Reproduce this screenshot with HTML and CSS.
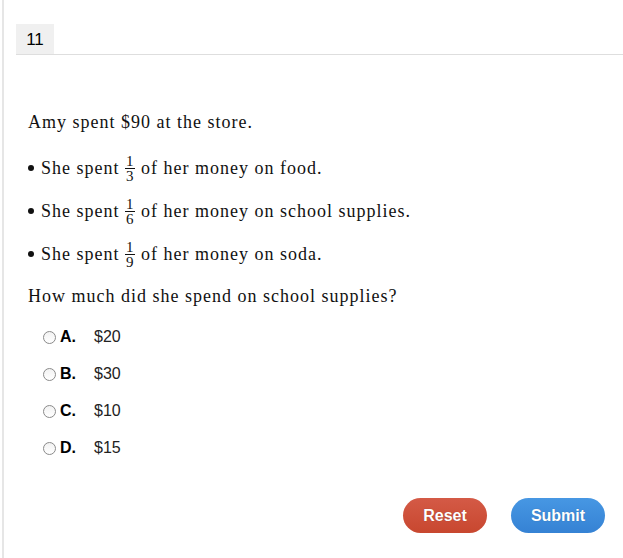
FILE: index.html
```html
<!DOCTYPE html>
<html>
<head>
<meta charset="utf-8">
<link rel="stylesheet" href="styles.css">
</head>
<body>
<div class="page">
  <div class="header">
    <div class="tab">11</div>
  </div>
  <div class="content">
    <p class="line first">Amy spent $90 at the store.</p>
    <p class="line bullet"><span class="dot"></span>She spent <span class="frac"><span class="num">1</span><span class="den">3</span></span> of her money on food.</p>
    <p class="line bullet"><span class="dot"></span>She spent <span class="frac"><span class="num">1</span><span class="den">6</span></span> of her money on school supplies.</p>
    <p class="line bullet last"><span class="dot"></span>She spent <span class="frac"><span class="num">1</span><span class="den">9</span></span> of her money on soda.</p>
    <p class="line question">How much did she spend on school supplies?</p>
    <div class="options">
      <label class="option"><span class="radio"></span><span class="letter">A.</span><span class="value">$20</span></label>
      <label class="option"><span class="radio"></span><span class="letter">B.</span><span class="value">$30</span></label>
      <label class="option"><span class="radio"></span><span class="letter">C.</span><span class="value">$10</span></label>
      <label class="option"><span class="radio"></span><span class="letter">D.</span><span class="value">$15</span></label>
    </div>
  </div>
  <div class="actions">
    <button class="btn reset">Reset</button>
    <button class="btn submit">Submit</button>
  </div>
</div>
</body>
</html>
```
FILE: styles.css
```css
html, body {
  margin: 0;
  padding: 0;
  background: #fff;
}
.page {
  margin-left: 2px;
  border-left: 2px solid #e6e6e6;
  min-height: 558px;
  box-sizing: border-box;
  padding-top: 24px;
}
.header {
  margin-left: 12px;
  border-bottom: 1px solid #dedede;
  display: flex;
}
.tab {
  width: 38px;
  height: 30px;
  background: #f0f0f0;
  font-family: "Liberation Sans", Arial, sans-serif;
  font-size: 17px;
  line-height: 31px;
  text-align: center;
  color: #000;
}
.content {
  padding-left: 24px;
  padding-top: 55px;
}
.line {
  margin: 0 0 19px 0;
  height: 24px;
  font-family: "Liberation Serif", serif;
  font-size: 18px;
  line-height: 24px;
  letter-spacing: 1px;
  color: #111;
  display: flex;
  align-items: center;
  white-space: pre;
}
.line.first {
  margin-bottom: 22px;
}
.line.last {
  margin-bottom: 18px;
}
.line.question {
  margin-bottom: 20px;
}
.dot {
  display: inline-block;
  width: 6px;
  height: 6px;
  background: #111;
  border-radius: 50%;
  margin: 0 7px 0 0;
}
.frac {
  display: inline-flex;
  flex-direction: column;
  align-items: center;
  font-size: 15px;
  line-height: 12px;
  letter-spacing: 0;
  margin: 0 1px 0 0;
}
.num {
  border-bottom: 1px solid #111;
  padding: 0 1px 1px;
}
.den {
  padding-top: 1px;
}
.options {
  padding-left: 15px;
  display: flex;
  flex-direction: column;
  gap: 19px;
}
.option {
  display: flex;
  align-items: center;
  height: 18px;
  font-family: "Liberation Sans", Arial, sans-serif;
  font-size: 16px;
}
.radio {
  width: 11px;
  height: 11px;
  border: 1px solid #8a8a8a;
  border-radius: 50%;
  background: linear-gradient(#f2f2f2, #fff);
  margin-right: 4px;
}
.letter {
  font-weight: bold;
  width: 34px;
  color: #000;
}
.value {
  color: #222;
}
.actions {
  display: flex;
  justify-content: flex-end;
  gap: 24px;
  padding: 41px 18px 0 0;
}
.btn {
  height: 35px;
  border: none;
  border-radius: 18px;
  color: #fff;
  font-family: "Liberation Sans", Arial, sans-serif;
  font-weight: bold;
  font-size: 16px;
  text-shadow: 0 0 1px rgba(0,0,0,0.3);
  padding: 0;
}
.reset {
  width: 84px;
  background: linear-gradient(#d45a46, #c8472f);
}
.submit {
  width: 94px;
  background: linear-gradient(#4797e3, #3582d4);
}
```
